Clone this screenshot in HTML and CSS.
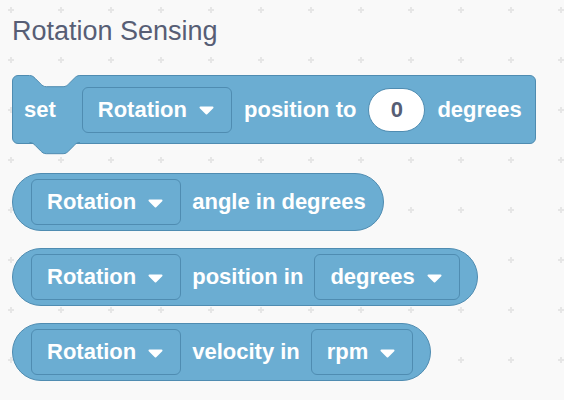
FILE: index.html
```html
<!DOCTYPE html>
<html>
<head>
<meta charset="utf-8">
<link rel="stylesheet" href="styles.css">
</head>
<body>
<svg class="grid" width="564" height="400" aria-hidden="true">
  <defs>
    <pattern id="plus" x="0" y="0" width="50" height="50" patternUnits="userSpaceOnUse">
      <rect x="10" y="7" width="2" height="6" fill="#e6e6e6"/>
      <rect x="8" y="9" width="6" height="2" fill="#e6e6e6"/>
    </pattern>
  </defs>
  <rect width="564" height="400" fill="url(#plus)"/>
</svg>
<main class="palette">
  <h1 class="title">Rotation Sensing</h1>

  <div class="block stack">
    <svg class="notch" width="52" height="13" viewBox="0 0 52 13">
      <path d="M0,0 H51 V0.5 H50.9 c-2.8,0 -4.2,1.4 -5.6,2.8 l-5.6,5.6 c-1.4,1.4 -2.8,2.8 -5.6,2.8 h-16.8 c-2.8,0 -4.2,-1.4 -5.6,-2.8 l-5.6,-5.6 c-1.4,-1.4 -2.8,-2.8 -5.6,-2.8 Z" fill="#f9f9f9"/>
      <path d="M0.5,0.5 c2.8,0 4.2,1.4 5.6,2.8 l5.6,5.6 c1.4,1.4 2.8,2.8 5.6,2.8 h16.8 c2.8,0 4.2,-1.4 5.6,-2.8 l5.6,-5.6 c1.4,-1.4 2.8,-2.8 5.6,-2.8" fill="none" stroke="#4f8cb1" stroke-width="1"/>
    </svg>
    <span class="label first">set</span>
    <span class="dropdown">Rotation<svg class="arrow" width="15" height="9" viewBox="0 0 15 9"><path d="M1.5,1.5 H13.5 L7.5,7.5 Z" fill="#fff" stroke="#fff" stroke-width="2" stroke-linejoin="round"/></svg></span>
    <span class="label">position to</span>
    <span class="number">0</span>
    <span class="label">degrees</span>
    <svg class="tab" width="52" height="13" viewBox="0 0 52 13">
      <path d="M0.5,0.5 c2.8,0 4.2,1.4 5.6,2.8 l5.6,5.6 c1.4,1.4 2.8,2.8 5.6,2.8 h16.8 c2.8,0 4.2,-1.4 5.6,-2.8 l5.6,-5.6 c1.4,-1.4 2.8,-2.8 5.6,-2.8 V0 H0.5 Z" fill="#6badd2"/>
      <path d="M0.5,0.5 c2.8,0 4.2,1.4 5.6,2.8 l5.6,5.6 c1.4,1.4 2.8,2.8 5.6,2.8 h16.8 c2.8,0 4.2,-1.4 5.6,-2.8 l5.6,-5.6 c1.4,-1.4 2.8,-2.8 5.6,-2.8" fill="none" stroke="#4f8cb1" stroke-width="1"/>
    </svg>
  </div>

  <div class="block reporter">
    <span class="dropdown">Rotation<svg class="arrow" width="15" height="9" viewBox="0 0 15 9"><path d="M1.5,1.5 H13.5 L7.5,7.5 Z" fill="#fff" stroke="#fff" stroke-width="2" stroke-linejoin="round"/></svg></span>
    <span class="label">angle in degrees</span>
  </div>

  <div class="block reporter">
    <span class="dropdown">Rotation<svg class="arrow" width="15" height="9" viewBox="0 0 15 9"><path d="M1.5,1.5 H13.5 L7.5,7.5 Z" fill="#fff" stroke="#fff" stroke-width="2" stroke-linejoin="round"/></svg></span>
    <span class="label">position in</span>
    <span class="dropdown">degrees<svg class="arrow" width="15" height="9" viewBox="0 0 15 9"><path d="M1.5,1.5 H13.5 L7.5,7.5 Z" fill="#fff" stroke="#fff" stroke-width="2" stroke-linejoin="round"/></svg></span>
  </div>

  <div class="block reporter">
    <span class="dropdown">Rotation<svg class="arrow" width="15" height="9" viewBox="0 0 15 9"><path d="M1.5,1.5 H13.5 L7.5,7.5 Z" fill="#fff" stroke="#fff" stroke-width="2" stroke-linejoin="round"/></svg></span>
    <span class="label">velocity in</span>
    <span class="dropdown">rpm<svg class="arrow" width="15" height="9" viewBox="0 0 15 9"><path d="M1.5,1.5 H13.5 L7.5,7.5 Z" fill="#fff" stroke="#fff" stroke-width="2" stroke-linejoin="round"/></svg></span>
  </div>
</main>
</body>
</html>
```
FILE: styles.css
```css
html, body {
  margin: 0;
  padding: 0;
  background: #f9f9f9;
  width: 564px;
  height: 400px;
  overflow: hidden;
}

body {
  position: relative;
  font-family: "Liberation Sans", Arial, Helvetica, sans-serif;
}

.grid {
  position: absolute;
  left: 0;
  top: 0;
  z-index: 0;
}

.palette {
  position: relative;
  z-index: 1;
  display: flex;
  flex-direction: column;
  align-items: flex-start;
  padding: 16px 0 0 12px;
}

.title {
  margin: 0 0 29px 0;
  font-size: 27px;
  line-height: 30px;
  font-weight: normal;
  color: #575e75;
}

.block {
  position: relative;
  box-sizing: border-box;
  display: inline-flex;
  align-items: center;
  background: #6badd2;
  border: 1px solid #4f8cb1;
  color: #fff;
  font-size: 22px;
  font-weight: bold;
  white-space: nowrap;
}

.stack {
  height: 69px;
  border-radius: 6px;
  padding: 0 13px 0 11px;
  gap: 12px;
  margin-bottom: 29px;
}

.stack .first {
  margin-right: 14px;
}

.notch {
  position: absolute;
  left: 16px;
  top: -1px;
}

.tab {
  position: absolute;
  left: 16px;
  bottom: -12px;
}

.reporter {
  height: 58px;
  border-radius: 29px;
  padding: 0 17px 0 18px;
  gap: 11px;
  margin-bottom: 17px;
}

.label {
  line-height: 26px;
}

.dropdown {
  box-sizing: border-box;
  display: inline-flex;
  align-items: center;
  gap: 12px;
  height: 46px;
  padding: 0 17px 0 15px;
  border: 1px solid #4f8cb1;
  border-radius: 6px;
  background: #6badd2;
  color: #fff;
}

.arrow {
  display: block;
  margin-top: 2px;
}

.number {
  box-sizing: border-box;
  display: inline-flex;
  align-items: center;
  justify-content: center;
  width: 57px;
  height: 44px;
  border-radius: 22px;
  background: #fff;
  border: 1px solid #4f8cb1;
  color: #575e75;
}
```
